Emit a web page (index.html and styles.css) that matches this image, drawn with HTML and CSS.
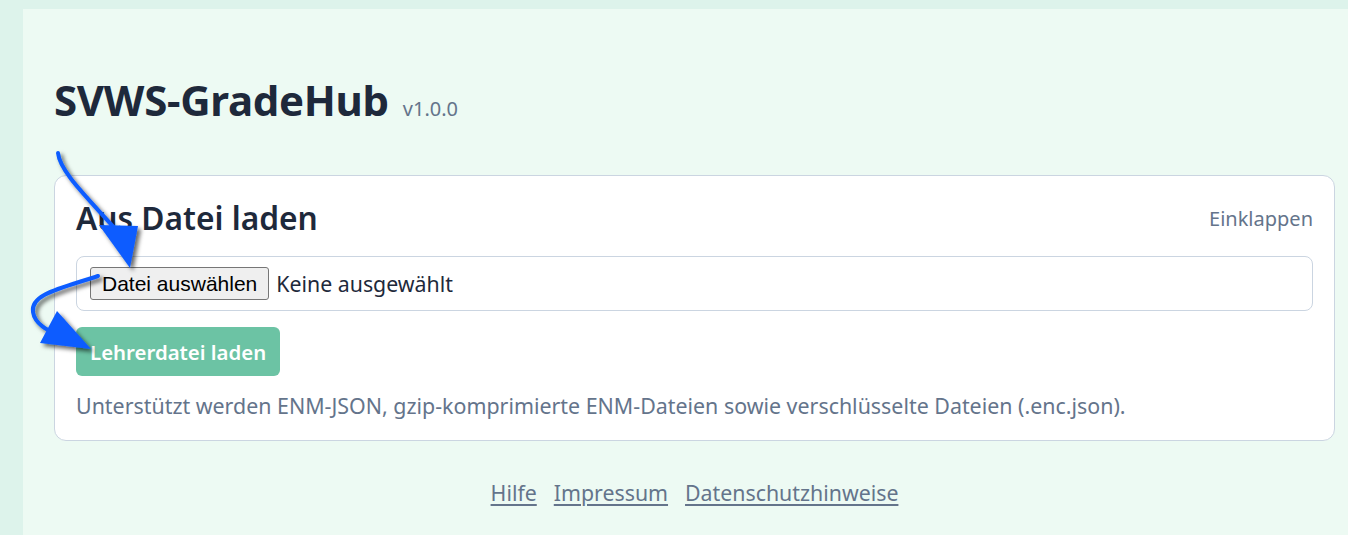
FILE: index.html
```html
<!DOCTYPE html>
<html lang="de">
<head>
<meta charset="utf-8">
<title>SVWS-GradeHub</title>
<link rel="stylesheet" href="styles.css">
</head>
<body>
<div class="page">
  <header class="header">
    <h1 class="title">SVWS-GradeHub</h1>
    <span class="version">v1.0.0</span>
  </header>
  <section class="card">
    <div class="card-head">
      <h2 class="card-title">Aus Datei laden</h2>
      <a class="collapse" href="#">Einklappen</a>
    </div>
    <div class="file-box">
      <span class="file-btn">Datei auswählen</span>
      <span class="file-name">Keine ausgewählt</span>
    </div>
    <button class="primary" type="button">Lehrerdatei laden</button>
    <p class="hint">Unterstützt werden ENM-JSON, gzip-komprimierte ENM-Dateien sowie verschlüsselte Dateien (.enc.json).</p>
  </section>
  <footer class="footer">
    <a href="#">Hilfe</a>
    <a href="#">Impressum</a>
    <a href="#">Datenschutzhinweise</a>
  </footer>
</div>
<svg class="arrows" width="1348" height="535" viewBox="0 0 1348 535">
  <defs>
    <filter id="sh" x="-20%" y="-20%" width="140%" height="140%">
      <feDropShadow dx="3" dy="3" stdDeviation="2" flood-color="#000" flood-opacity="0.6"/>
    </filter>
  </defs>
  <g filter="url(#sh)" fill="#0a5cff" stroke="#0a5cff">
    <path d="M58,153 C60,172 88,198 118,232" fill="none" stroke-width="4" stroke-linecap="round"/>
    <polygon points="99,225 138,226 130,268" stroke="none"/>
    <path d="M98,276 C62,288 30,294 33,312 C35,326 52,332 64,338" fill="none" stroke-width="4" stroke-linecap="round"/>
    <polygon points="57,311 91,349 40,343" stroke="none"/>
  </g>
</svg>
</body>
</html>
```

FILE: styles.css
```css
html, body {
  margin: 0;
  padding: 0;
}
body {
  background: #ddf3eb;
  font-family: "Noto Sans", "Open Sans", sans-serif;
  color: #1e293b;
  width: 1348px;
  height: 535px;
  overflow: hidden;
  position: relative;
}
.page {
  margin: 9px 0 0 23px;
  padding: 0 13px 40px 31px;
  background: #edfaf3;
  min-height: 526px;
  box-sizing: border-box;
}
.header {
  display: flex;
  align-items: baseline;
  gap: 14px;
  padding-top: 66px;
}
.title {
  margin: 0;
  font-size: 42px;
  font-weight: 700;
  line-height: 1.2;
  color: #1e293b;
  letter-spacing: -0.3px;
}
.version {
  font-size: 20px;
  color: #64748b;
}
.card {
  margin-top: 50px;
  background: #fff;
  border: 1px solid #cbd5e1;
  border-radius: 12px;
  padding: 22px 21px 18px;
}
.card-head {
  display: flex;
  justify-content: space-between;
  align-items: center;
}
.card-title {
  margin: 0;
  font-size: 31.7px;
  font-weight: 600;
  line-height: 40px;
  color: #1e293b;
}
.collapse {
  font-size: 20px;
  color: #64748b;
  text-decoration: none;
}
.file-box {
  margin-top: 18px;
  display: flex;
  align-items: center;
  gap: 7px;
  border: 1px solid #cbd5e1;
  border-radius: 8px;
  padding: 10px 13px;
}
.file-btn {
  font-family: "Liberation Sans", Arial, sans-serif;
  font-size: 21px;
  line-height: 23px;
  color: #000;
  background: #efefef;
  border: 1px solid #767676;
  border-radius: 3px;
  padding: 4px 11px;
}
.file-name {
  font-size: 21.33px;
  line-height: 33px;
  color: #1e293b;
}
.primary {
  display: block;
  margin-top: 16px;
  font-family: "Noto Sans", sans-serif;
  font-size: 20.4px;
  font-weight: 600;
  color: #fff;
  background: #6cc3a4;
  border: 0;
  border-radius: 6px;
  padding: 0 14px;
  height: 49px;
}
.hint {
  margin: 14px 0 0;
  font-size: 21.4px;
  line-height: 32px;
  color: #64748b;
}
.footer {
  display: flex;
  justify-content: center;
  gap: 17px;
  margin-top: 36px;
  line-height: 32px;
}
.footer a {
  font-size: 21.33px;
  color: #64748b;
  text-decoration: underline;
  text-underline-offset: 3px;
}
.arrows {
  position: absolute;
  left: 0;
  top: 0;
  pointer-events: none;
}
```
